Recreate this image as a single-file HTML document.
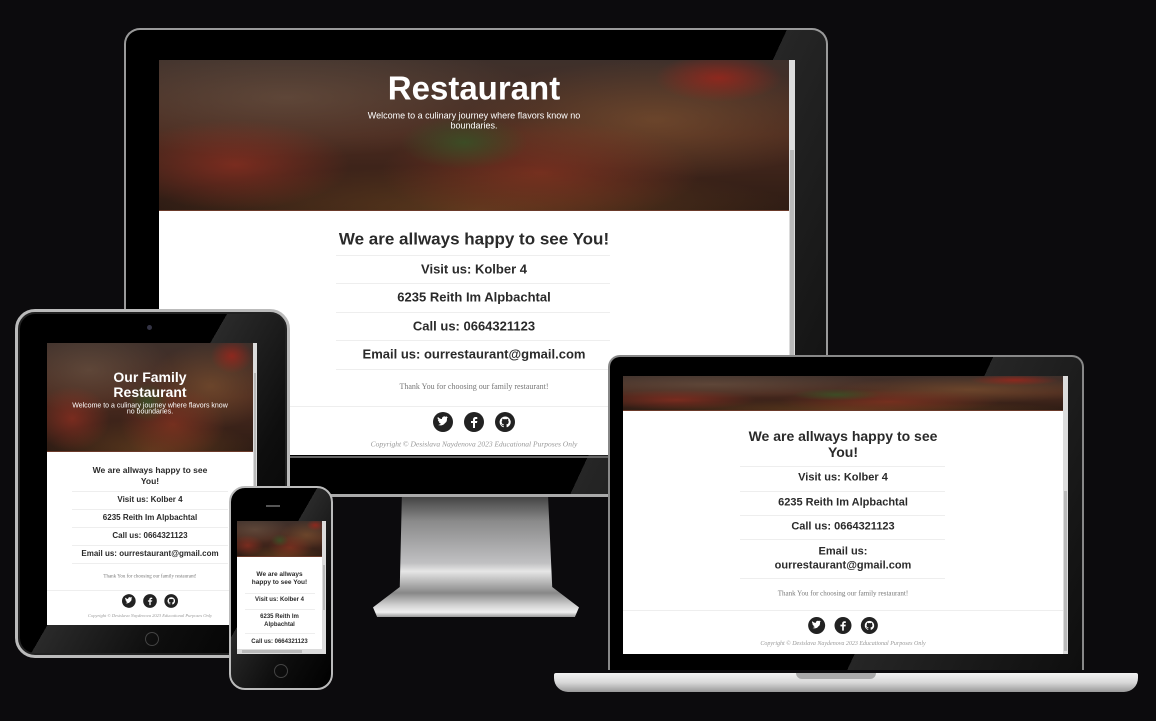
<!DOCTYPE html>
<html><head><meta charset="utf-8">
<style>
*{margin:0;padding:0;box-sizing:border-box}
body{width:1156px;height:721px;background:#0c0b0d;overflow:hidden;position:relative;font-family:"Liberation Sans",sans-serif}
.a{position:absolute}
.scr{position:absolute;background:#fff;overflow:hidden}
.hero{position:absolute;left:0;top:0;width:100%;
background:
radial-gradient(ellipse 10% 18% at 48% 55%,rgba(50,90,40,.7),transparent),
radial-gradient(ellipse 18% 30% at 12% 70%,rgba(170,50,35,.55),transparent),
radial-gradient(ellipse 25% 35% at 60% 75%,rgba(160,55,35,.55),transparent),
radial-gradient(ellipse 10% 16% at 88% 12%,rgba(170,35,25,.7),transparent),
radial-gradient(ellipse 30% 40% at 78% 40%,rgba(150,100,55,.45),transparent),
radial-gradient(ellipse 40% 40% at 20% 25%,rgba(120,95,75,.5),transparent),
radial-gradient(ellipse 50% 30% at 50% 100%,rgba(120,75,35,.6),transparent),
linear-gradient(180deg,#3e302b,#4a2a1f 50%,#2e1c14);}
.t{position:absolute;left:0;width:100%;text-align:center;white-space:nowrap;transform:translateY(-50%);line-height:1}
.w{color:#fff;font-weight:bold}
.k{color:#2a2a2a;font-weight:bold}
.s{color:#777;font-family:"Liberation Serif",serif}
.i{font-style:italic;color:#999;font-family:"Liberation Serif",serif}
.sep{position:absolute;height:1px;background:#eee}
.sb{position:absolute;right:0;top:0;height:100%;background:#dcdcdc}
.sb i{position:absolute;left:1px;right:1px;background:#b9b9b9}
</style></head><body>

<svg width="0" height="0" style="position:absolute">
<defs>
<g id="ic">
    <g fill="#222"><circle cx="10" cy="10" r="10"/><circle cx="41" cy="10" r="10"/><circle cx="72" cy="10" r="10"/></g>
    <path d="M5 13c3 1 6 0 7-2 2-1 2-3 2-5l1-1-1 0 0-1-1 1c-1-1-3-1-4 1v1c-2 0-3-1-4-2-1 1 0 3 1 3l-1 0c0 1 1 2 2 2h-1c0 1 1 1 2 2-1 0-2 1-3 1z" fill="#fff"/>
    <path d="M42 16v-5h2l.3-2H42V8c0-.6.2-1 1-1h1.3V5.2C44 5.1 43.4 5 42.8 5 41 5 40 6 40 7.8V9h-2v2h2v5z" fill="#fff"/>
    <path d="M72 4.5a5.5 5.5 0 0 0-1.7 10.7c.3 0 .4-.1.4-.3v-1c-1.5.3-1.8-.7-1.8-.7-.3-.6-.6-.8-.6-.8-.5-.3 0-.3 0-.3.6 0 .9.6.9.6.5.8 1.3.6 1.6.4 0-.3.2-.6.4-.7-1.2-.1-2.5-.6-2.5-2.7 0-.6.2-1.1.6-1.5-.1-.1-.3-.7 0-1.5 0 0 .5-.1 1.5.6a5 5 0 0 1 2.8 0c1-.7 1.5-.6 1.5-.6.3.8.1 1.4 0 1.5.4.4.6.9.6 1.5 0 2.1-1.3 2.6-2.5 2.7.2.2.4.5.4 1v1.5c0 .2.1.3.4.3A5.5 5.5 0 0 0 72 4.5z" fill="#fff"/>
</g>
</defs></svg>

<!-- MONITOR -->
<div class="a" style="left:124px;top:28px;width:704px;height:469px;border-radius:16px 16px 0 0;background:linear-gradient(115deg,#000 0 72%,#262626 72%,#0e0e0e);border:2px solid #9a9a9a;border-bottom:none"></div>
<div class="a" style="left:126px;top:456px;width:700px;height:2px;background:#666"></div>
<div class="a" style="left:126px;top:494px;width:700px;height:3px;background:#aaa"></div>
<div class="a" style="left:373px;top:497px;width:206px;height:120px;clip-path:polygon(14% 0,85% 0,87% 75%,100% 92%,98% 100%,2% 100%,0 92%,13% 75%);background:linear-gradient(180deg,#444 0,#8a8a8a 20%,#c0c0c2 55%,#e6e6e6 62%,#888 80%,#d0d0d0 90%,#f0f0f0 96%,#999)"></div>
<div class="scr" style="left:159px;top:60px;width:636px;height:395px">
  <div class="hero" style="height:151px;border-bottom:1px solid #6a3a2a"></div>
  <div class="t w" style="top:28px;font-size:33px;width:630px">Restaurant</div>
  <div class="t w" style="top:56px;font-size:9px;font-weight:normal;width:630px">Welcome to a culinary journey where flavors know no</div>
  <div class="t w" style="top:66px;font-size:9px;font-weight:normal;width:630px">boundaries.</div>
  <div class="t k" style="top:179px;font-size:17px;width:630px">We are allways happy to see You!</div>
  <div class="sep" style="left:177px;width:274px;top:195px"></div>
  <div class="t k" style="top:209px;font-size:13px;width:630px">Visit us: Kolber 4</div>
  <div class="sep" style="left:177px;width:274px;top:223px"></div>
  <div class="t k" style="top:237px;font-size:13px;width:630px">6235 Reith Im Alpbachtal</div>
  <div class="sep" style="left:177px;width:274px;top:252px"></div>
  <div class="t k" style="top:266px;font-size:13px;width:630px">Call us: 0664321123</div>
  <div class="sep" style="left:177px;width:274px;top:280px"></div>
  <div class="t k" style="top:294px;font-size:13px;width:630px">Email us: ourrestaurant@gmail.com</div>
  <div class="sep" style="left:177px;width:274px;top:309px"></div>
  <div class="t s" style="top:327px;font-size:8px;width:630px">Thank You for choosing our family restaurant!</div>
  <div class="sep" style="left:0;width:630px;top:346px"></div>
  <svg class="a" style="left:274px;top:352px" width="82" height="20" viewBox="0 0 82 20"><use href="#ic"/></svg>
  <div class="t i" style="top:384px;font-size:7.5px;width:630px">Copyright © Desislava Naydenova 2023 Educational Purposes Only</div>
  <div class="sb" style="width:6px"><i style="top:90px;height:305px"></i></div>
</div>

<!-- TABLET -->
<div class="a" style="left:15px;top:309px;width:275px;height:349px;border-radius:20px;background:linear-gradient(120deg,#000 0 45%,#2a2a2a 45%,#0e0e0e 70%,#000);border:3px solid #bbb;box-shadow:inset 0 0 0 2px #222"></div>
<div class="a" style="left:147px;top:325px;width:5px;height:5px;border-radius:50%;background:#334"></div>
<div class="a" style="left:145px;top:632px;width:14px;height:14px;border-radius:50%;border:1px solid #444"></div>
<div class="scr" style="left:47px;top:343px;width:210px;height:282px">
  <div class="hero" style="height:109px;border-bottom:1px solid #6a3a2a"></div>
  <div class="t w" style="top:34px;font-size:14px;width:206px">Our Family</div>
  <div class="t w" style="top:49px;font-size:14px;width:206px">Restaurant</div>
  <div class="t w" style="top:63px;font-size:7px;font-weight:normal;width:206px">Welcome to a culinary journey where flavors know</div>
  <div class="t w" style="top:69px;font-size:7px;font-weight:normal;width:206px">no boundaries.</div>
  <div class="t k" style="top:127px;font-size:8.5px;width:206px">We are allways happy to see</div>
  <div class="t k" style="top:138px;font-size:8.5px;width:206px">You!</div>
  <div class="sep" style="left:25px;width:156px;top:148px"></div>
  <div class="t k" style="top:157px;font-size:8px;width:206px">Visit us: Kolber 4</div>
  <div class="sep" style="left:25px;width:156px;top:166px"></div>
  <div class="t k" style="top:175px;font-size:8px;width:206px">6235 Reith Im Alpbachtal</div>
  <div class="sep" style="left:25px;width:156px;top:184px"></div>
  <div class="t k" style="top:193px;font-size:8px;width:206px">Call us: 0664321123</div>
  <div class="sep" style="left:25px;width:156px;top:202px"></div>
  <div class="t k" style="top:211px;font-size:8px;width:206px">Email us: ourrestaurant@gmail.com</div>
  <div class="sep" style="left:25px;width:156px;top:220px"></div>
  <div class="t s" style="top:234px;font-size:5px;width:206px">Thank You for choosing our family restaurant!</div>
  <div class="sep" style="left:0;width:206px;top:247px"></div>
  <svg class="a" style="left:75px;top:251px" width="56" height="14" viewBox="0 0 82 20"><use href="#ic"/></svg>
  <div class="t i" style="top:273px;font-size:4.5px;width:206px">Copyright © Desislava Naydenova 2023 Educational Purposes Only</div>
  <div class="sb" style="width:4px"><i style="top:30px;height:120px"></i></div>
</div>

<!-- PHONE -->
<div class="a" style="left:229px;top:486px;width:104px;height:204px;border-radius:16px;background:linear-gradient(120deg,#000 0 40%,#2a2a2a 40%,#0e0e0e 70%,#000);border:2px solid #bbb"></div>
<div class="a" style="left:266px;top:505px;width:14px;height:2px;background:#555"></div>
<div class="a" style="left:274px;top:664px;width:14px;height:14px;border-radius:50%;border:1px solid #444"></div>
<div class="scr" style="left:237px;top:521px;width:89px;height:133px">
  <div class="hero" style="height:36px;border-bottom:1px solid #6a3a2a"></div>
  <div class="t k" style="top:54px;font-size:6.5px;width:85px">We are allways</div>
  <div class="t k" style="top:62px;font-size:6.5px;width:85px">happy to see You!</div>
  <div class="sep" style="left:8px;width:70px;top:72px"></div>
  <div class="t k" style="top:79px;font-size:6px;width:85px">Visit us: Kolber 4</div>
  <div class="sep" style="left:8px;width:70px;top:88px"></div>
  <div class="t k" style="top:96px;font-size:6px;width:85px">6235 Reith Im</div>
  <div class="t k" style="top:104px;font-size:6px;width:85px">Alpbachtal</div>
  <div class="sep" style="left:8px;width:70px;top:112px"></div>
  <div class="t k" style="top:121px;font-size:6px;width:85px">Call us: 0664321123</div>
  <div class="sb" style="width:4px"><i style="top:44px;height:45px"></i></div>
  <div class="a" style="left:0;bottom:0;width:85px;height:5px;background:#dcdcdc"><div class="a" style="left:5px;top:1px;width:60px;height:3px;background:#b9b9b9"></div></div>
</div>

<!-- LAPTOP -->
<div class="a" style="left:608px;top:355px;width:476px;height:315px;border-radius:12px 12px 0 0;background:linear-gradient(115deg,#000 0 62%,#262626 62%,#0e0e0e);border:2px solid #888;border-bottom:none"></div>
<div class="a" style="left:554px;top:673px;width:584px;height:19px;border-radius:2px 2px 14px 14px;background:linear-gradient(180deg,#f2f2f2,#d8d8d8 50%,#999);"></div>
<div class="a" style="left:796px;top:673px;width:80px;height:6px;border-radius:0 0 6px 6px;background:#aaa"></div>
<div class="scr" style="left:623px;top:376px;width:445px;height:278px">
  <div class="hero" style="height:35px;border-bottom:1px solid #6a3a2a"></div>
  <div class="t k" style="top:60px;font-size:14px;width:440px">We are allways happy to see</div>
  <div class="t k" style="top:76px;font-size:14px;width:440px">You!</div>
  <div class="sep" style="left:117px;width:205px;top:90px"></div>
  <div class="t k" style="top:102px;font-size:11px;width:440px">Visit us: Kolber 4</div>
  <div class="sep" style="left:117px;width:205px;top:115px"></div>
  <div class="t k" style="top:127px;font-size:11px;width:440px">6235 Reith Im Alpbachtal</div>
  <div class="sep" style="left:117px;width:205px;top:139px"></div>
  <div class="t k" style="top:151px;font-size:11px;width:440px">Call us: 0664321123</div>
  <div class="sep" style="left:117px;width:205px;top:163px"></div>
  <div class="t k" style="top:176px;font-size:11px;width:440px">Email us:</div>
  <div class="t k" style="top:190px;font-size:11px;width:440px">ourrestaurant@gmail.com</div>
  <div class="sep" style="left:117px;width:205px;top:202px"></div>
  <div class="t s" style="top:218px;font-size:7px;width:440px">Thank You for choosing our family restaurant!</div>
  <div class="sep" style="left:0;width:440px;top:234px"></div>
  <svg class="a" style="left:185px;top:241px" width="70" height="17" viewBox="0 0 82 20"><use href="#ic"/></svg>
  <div class="t i" style="top:268px;font-size:6px;width:440px">Copyright © Desislava Naydenova 2023 Educational Purposes Only</div>
  <div class="sb" style="width:5px"><i style="top:115px;height:160px"></i></div>
</div>
</body></html>
